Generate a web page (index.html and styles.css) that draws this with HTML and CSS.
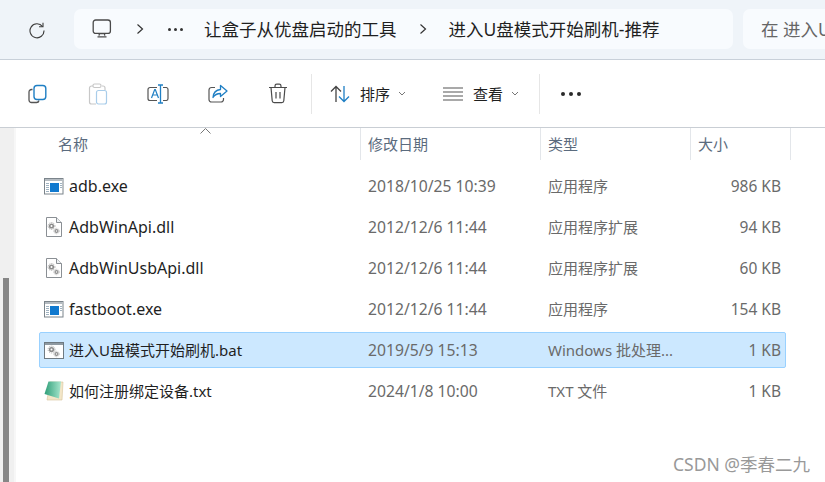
FILE: index.html
```html
<!DOCTYPE html>
<html lang="zh-CN">
<head>
    <meta charset="UTF-8">
    <title>进入U盘模式开始刷机-推荐</title>
    <link rel="stylesheet" href="styles.css">
</head>
<body>
    <div class="addressbar">
        <svg class="refresh" width="18" height="18" viewBox="0 0 18 18" fill="none" stroke="#3c3c3c" stroke-width="1.1"><path d="M14.6 5.6A7 7 0 1 0 16 9.5"/><path d="M15 1.8v4h-4"/></svg>
        <div class="crumbs">
            <svg class="pc" width="20" height="20" viewBox="0 0 20 20" fill="none" stroke="#4a4a4a" stroke-width="1.3"><rect x="1.2" y="1" width="17.2" height="13.4" rx="2.5"/><path d="M7 16.6l.4-2h5l.4 2M5.500 17.800h9"/></svg>
            <svg class="chev chev-first" width="8" height="12" viewBox="0 0 8 12" fill="none" stroke="#333" stroke-width="1.2"><path d="M1.500 1.500L6.500 6l-5 4.500"/></svg>
            <div class="dots"><i></i><i></i><i></i></div>
            <span class="crumb">让盒子从优盘启动的工具</span>
            <svg class="chev chev-second" width="8" height="12" viewBox="0 0 8 12" fill="none" stroke="#333" stroke-width="1.2"><path d="M1.500 1.500L6.500 6l-5 4.500"/></svg>
            <span class="crumb crumb-last">进入U盘模式开始刷机-推荐</span>
        </div>
        <div class="search">在 进入U</div>
    </div>

    <div class="toolbar">
        <div class="tool">
            <svg width="20" height="20" viewBox="0 0 20 20" fill="none"><path d="M4.500 5.500H3.500A2.500 2.500 0 0 0 1 8v8a2.500 2.500 0 0 0 2.500 2.500h5A2.500 2.500 0 0 0 11 16.500" stroke="#555" stroke-width="1.3"/><rect x="6" y="1.500" width="11.800" height="14" rx="3" stroke="#1f7fc4" stroke-width="1.400"/></svg>
        </div>
        <div class="tool">
            <svg width="20" height="22" viewBox="0 0 20 22" fill="none"><path d="M5 3H3.500A2 2 0 0 0 1.500 5v14a2 2 0 0 0 2 2H8M14 3h1a2 2 0 0 1 2 2v2" stroke="#c8c8c8" stroke-width="1.200"/><rect x="5" y="1" width="8" height="3.500" rx="1.500" stroke="#c8c8c8" stroke-width="1.200"/><rect x="8.500" y="7.500" width="10" height="13.500" rx="2" stroke="#a9cdea" stroke-width="1.200"/></svg>
        </div>
        <div class="tool">
            <svg width="22" height="20" viewBox="0 0 22 20" fill="none"><path d="M10 3.500H3A2 2 0 0 0 1 5.500v9a2 2 0 0 0 2 2h7M16 3.500h3.500a2 2 0 0 1 1.500 2v9a2 2 0 0 1-1.500 2H16" stroke="#555" stroke-width="1.200"/><path d="M13.500 1v18M11 1h5M11 19h5" stroke="#1f7fc4" stroke-width="1.300"/><path d="M4.500 14l3.200-8.500h.6L11.500 14M5.700 11h5" stroke="#1f7fc4" stroke-width="1.200"/></svg>
        </div>
        <div class="tool">
            <svg width="20" height="20" viewBox="0 0 20 20" fill="none"><path d="M7 3.500H3.500A2.500 2.500 0 0 0 1 6v9.500A2.500 2.500 0 0 0 3.500 18H13a2.500 2.500 0 0 0 2.500-2.500V14" stroke="#555" stroke-width="1.200"/><path d="M12.500 1.500L19 7l-6.500 5.500V9.500C9 9.500 6.500 11 5 13.500c.300-4.500 3-7.500 7.500-8z" stroke="#1f7fc4" stroke-width="1.300" stroke-linejoin="round"/></svg>
        </div>
        <div class="tool">
            <svg width="20" height="21" viewBox="0 0 20 21" fill="none" stroke="#4a4a4a" stroke-width="1.200"><path d="M1 4.500h18M7 4.500V3a1.800 1.800 0 0 1 1.800-1.800h2.400A1.800 1.800 0 0 1 13 3v1.500"/><path d="M3 4.500l1.200 13.300a2 2 0 0 0 2 1.900h7.600a2 2 0 0 0 2-1.900L17 4.500"/><path d="M8 9v6.500M12 9v6.500"/></svg>
        </div>
        <div class="sep"></div>
        <div class="menu menu-sort">
            <svg width="20" height="18" viewBox="0 0 20 18" fill="none" stroke-width="1.300"><path d="M6 17V1.500M1 6.500l5-5 5 5" stroke="#444"/><path d="M14 1v15.500M9 11.500l5 5 5-5" stroke="#1f7fc4"/></svg>
            <span>排序</span>
            <svg class="caret" width="8" height="5" viewBox="0 0 8 5" fill="none" stroke="#777"><path d="M1 1l3 3 3-3"/></svg>
        </div>
        <div class="menu menu-view">
            <svg width="20" height="14" viewBox="0 0 20 14" fill="none" stroke="#555" stroke-width="1.100"><path d="M0 1h20M0 5h20M0 9h20M0 13h20"/></svg>
            <span>查看</span>
            <svg class="caret" width="8" height="5" viewBox="0 0 8 5" fill="none" stroke="#777"><path d="M1 1l3 3 3-3"/></svg>
        </div>
        <div class="sep sep-last"></div>
        <div class="more"><i></i><i></i><i></i></div>
    </div>

    <div class="content">
        <div class="gutter"><div class="thumb"></div></div>
        <div class="files">
            <div class="head">
                <div class="col col-name">名称<svg class="sort" width="11" height="6" viewBox="0 0 11 6" fill="none" stroke="#777"><path d="M.5 5.500l5-5 5 5"/></svg></div>
                <div class="col col-date">修改日期</div>
                <div class="col col-type">类型</div>
                <div class="col col-size">大小</div>
            </div>

            <div class="row">
                <div class="name latin"><svg class="ico" width="20" height="17" viewBox="0 0 20 17"><use href="#exe"/></svg>adb.exe</div>
                <div class="date">2018/10/25 10:39</div>
                <div class="type">应用程序</div>
                <div class="size">986 KB</div>
            </div>
            <div class="row">
                <div class="name latin"><svg class="ico" width="20" height="20" viewBox="0 0 20 20"><use href="#dll"/></svg>AdbWinApi.dll</div>
                <div class="date">2012/12/6 11:44</div>
                <div class="type">应用程序扩展</div>
                <div class="size">94 KB</div>
            </div>
            <div class="row">
                <div class="name latin"><svg class="ico" width="20" height="20" viewBox="0 0 20 20"><use href="#dll"/></svg>AdbWinUsbApi.dll</div>
                <div class="date">2012/12/6 11:44</div>
                <div class="type">应用程序扩展</div>
                <div class="size">60 KB</div>
            </div>
            <div class="row">
                <div class="name latin"><svg class="ico" width="20" height="17" viewBox="0 0 20 17"><use href="#exe"/></svg>fastboot.exe</div>
                <div class="date">2012/12/6 11:44</div>
                <div class="type">应用程序</div>
                <div class="size">154 KB</div>
            </div>
            <div class="row selected">
                <div class="name"><svg class="ico" width="20" height="17" viewBox="0 0 20 17"><use href="#bat"/></svg>进入U盘模式开始刷机.bat</div>
                <div class="date">2019/5/9 15:13</div>
                <div class="type">Windows 批处理...</div>
                <div class="size">1 KB</div>
            </div>
            <div class="row">
                <div class="name"><svg class="ico" width="20" height="20" viewBox="0 0 20 20"><use href="#txt"/></svg>如何注册绑定设备.txt</div>
                <div class="date">2024/1/8 10:00</div>
                <div class="type">TXT 文件</div>
                <div class="size">1 KB</div>
            </div>
        </div>
    </div>

    <div class="watermark">CSDN @季春二九</div>

    <svg class="defs" width="0" height="0">
        <defs>
            <linearGradient id="txtgreen" x1="0" y1="0" x2="1" y2="0">
                <stop offset="0" stop-color="#2f9e78"/>
                <stop offset="1" stop-color="#a6e6cd"/>
            </linearGradient>
            <g id="gears" fill="#8c8c8c">
                <circle cx="0" cy="0" r="2.600"/>
                <circle cx="0" cy="0" r="3.400" fill="none" stroke="#a8a8a8" stroke-width="1" stroke-dasharray="1.200 1"/>
                <circle cx="0" cy="0" r="1" fill="#fff"/>
            </g>
            <g id="exe">
                <rect x=".5" y=".5" width="18.500" height="15.500" fill="#fff" stroke="#7b848b"/>
                <rect x="1" y="1" width="17.500" height="2" fill="#b4bbc1"/>
                <rect x="6" y="5" width="9" height="9" fill="#1079cf"/>
                <path d="M2 5.500h3M2 7.500h3M2 9.500h3M2 11.500h3M2 13.500h3M16 5.500h2M16 7.500h2M16 9.500h2" stroke="#9fb2c0"/>
            </g>
            <g id="dll">
                <path d="M2.500.5h10l5 5v14h-15z" fill="#fff" stroke="#8a8f94"/>
                <path d="M12.500.5v5h5" fill="#eef1f3" stroke="#8a8f94"/>
                <use href="#gears" transform="translate(7.500 9)"/>
                <use href="#gears" transform="translate(12.500 14) scale(.8)"/>
            </g>
            <g id="bat">
                <rect x=".5" y=".5" width="19" height="16" fill="#fff" stroke="#6f7a82"/>
                <rect x="1" y="1" width="18" height="2" fill="#8f9aa2"/>
                <use href="#gears" transform="translate(7.500 7.500)"/>
                <use href="#gears" transform="translate(12.500 12) scale(.8)"/>
            </g>
            <g id="txt">
                <path d="M6 1h13l-1 18H3z" fill="#f3e6c8" stroke="#d6c49a" stroke-width=".6"/>
                <path d="M4.500 .5h12.500l-2 17L.5 13z" fill="url(#txtgreen)"/>
            </g>
        </defs>
    </svg>
</body>
</html>
```

FILE: styles.css
```css
html, body {
    margin: 0;
    padding: 0;
}
body {
    width: 825px;
    height: 482px;
    overflow: hidden;
    background: #fff;
    position: relative;
    color: #1f1f1f;
    font-family: "Noto Sans", "Noto Sans CJK SC", sans-serif;
    font-size: 15px;
}

.addressbar {
    height: 50px;
    padding-top: 9px;
    background: #eff4f9;
    border-bottom: 1px solid #c8d0d9;
    display: flex;
    align-items: flex-start;
}
.refresh {
    margin: 12px 0 0 28px;
}
.crumbs {
    margin-left: 28px;
    width: 659px;
    height: 40px;
    background: #f8fbfe;
    border-radius: 7px;
    display: flex;
    align-items: center;
    font-size: 17.5px;
    line-height: 22px;
    flex: none;
}
.pc {
    margin-left: 18px;
}
.chev-first {
    margin-left: 24px;
}
.dots {
    margin-left: 24px;
    display: flex;
    gap: 3px;
}
.dots i {
    width: 3px;
    height: 3px;
    border-radius: 50%;
    background: #333;
}
.crumb {
    margin-left: 21px;
    white-space: nowrap;
}
.chev-second {
    margin-left: 22px;
}
.crumbs .crumb-last {
    margin-left: 22px;
}
.search {
    margin-left: 10px;
    flex: 1;
    height: 40px;
    line-height: 40px;
    background: #f8fbfe;
    border-radius: 7px 0 0 7px;
    padding-left: 18px;
    color: #666;
    font-size: 17.5px;
    white-space: nowrap;
    overflow: hidden;
}

.toolbar {
    height: 67px;
    border-bottom: 1px solid #c9ced4;
    display: flex;
    align-items: center;
    background: #fff;
}
.tool {
    width: 60px;
    display: flex;
    justify-content: center;
}
.tool:first-child {
    margin-left: 8px;
}
.sep {
    width: 1px;
    height: 40px;
    background: #e6e6e6;
    margin-left: 3px;
}
.menu {
    display: flex;
    align-items: center;
    font-size: 15px;
    line-height: 20px;
}
.menu span {
    margin-left: 10px;
}
.caret {
    margin-left: 8px;
}
.menu-sort {
    margin-left: 18px;
}
.menu-view {
    margin-left: 37px;
}
.sep-last {
    margin-left: 20px;
}
.more {
    margin-left: 21px;
    display: flex;
    gap: 4px;
}
.more i {
    width: 4px;
    height: 4px;
    border-radius: 50%;
    background: #2a2a2a;
}

.content {
    display: flex;
    height: 354px;
}
.gutter {
    width: 16px;
    background: #f0f0f0;
    border-right: 2px solid #f7f7f7;
    box-sizing: border-box;
    padding: 150px 0 0 3px;
}
.thumb {
    width: 6px;
    height: 204px;
    background: #868686;
}
.files {
    flex: 1;
}

.head {
    height: 32px;
    display: grid;
    grid-template-columns: 345px 180px 150px 100px;
    color: #5b6b7e;
    font-size: 15px;
}
.col {
    position: relative;
    line-height: 32px;
    padding-left: 7px;
    border-right: 1px solid #e3e6ea;
}
.col-name {
    padding-left: 42px;
}
.sort {
    position: absolute;
    left: 184px;
    top: 0;
}

.row {
    margin: 8px 0 5px 23px;
    width: 747px;
    height: 36px;
    box-sizing: border-box;
    border: 1px solid transparent;
    border-radius: 2px;
    display: grid;
    grid-template-columns: 328px 180px 150px 1fr;
    align-items: center;
    color: #6a6a6a;
    font-size: 15px;
    line-height: 20px;
}
.row + .row {
    margin-top: 0;
}
.selected {
    background: #cce8ff;
    border-color: #99d1ff;
}
.name {
    display: flex;
    align-items: center;
    color: #1f1f1f;
    font-size: 15px;
    white-space: nowrap;
}
.latin {
    font-size: 16px;
}
.ico {
    margin: 0 5px 0 4px;
    flex: none;
}
.date {
    font-size: 15.7px;
}
.size {
    font-size: 15.5px;
    text-align: right;
    padding-right: 4px;
}

.watermark {
    position: absolute;
    left: 673px;
    top: 451px;
    color: #999;
    font-size: 17.5px;
    white-space: nowrap;
}
.defs {
    position: absolute;
}
```
